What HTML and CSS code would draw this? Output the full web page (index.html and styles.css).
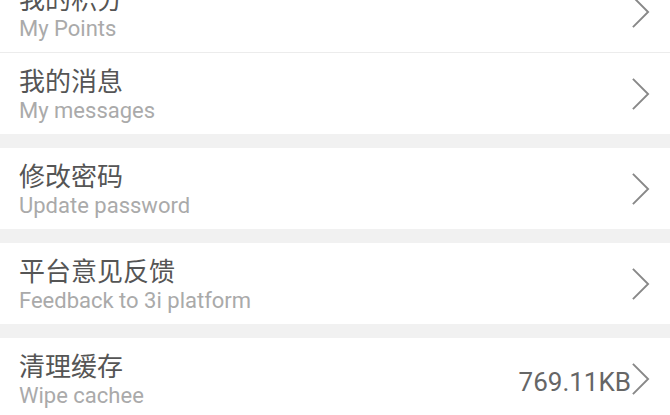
FILE: index.html
```html
<!DOCTYPE html>
<html lang="zh-CN">
<head>
    <meta charset="UTF-8">
    <meta name="viewport" content="width=device-width, initial-scale=1.0">
    <title>我的</title>
    <link rel="stylesheet" href="styles.css">
</head>
<body>
    <div class="menu">
        <div class="group">
            <div class="item">
                <div class="text">
                    <div class="title">我的积分</div>
                    <div class="sub">My Points</div>
                </div>
                <svg class="arrow" viewBox="0 0 20 36"><polyline points="2,2 18,18 2,34"/></svg>
            </div>
            <div class="item">
                <div class="text">
                    <div class="title">我的消息</div>
                    <div class="sub">My messages</div>
                </div>
                <svg class="arrow" viewBox="0 0 20 36"><polyline points="2,2 18,18 2,34"/></svg>
            </div>
        </div>

        <div class="group">
            <div class="item">
                <div class="text">
                    <div class="title">修改密码</div>
                    <div class="sub">Update password</div>
                </div>
                <svg class="arrow" viewBox="0 0 20 36"><polyline points="2,2 18,18 2,34"/></svg>
            </div>
        </div>

        <div class="group">
            <div class="item">
                <div class="text">
                    <div class="title">平台意见反馈</div>
                    <div class="sub">Feedback to 3i platform</div>
                </div>
                <svg class="arrow" viewBox="0 0 20 36"><polyline points="2,2 18,18 2,34"/></svg>
            </div>
        </div>

        <div class="group">
            <div class="item">
                <div class="text">
                    <div class="title">清理缓存</div>
                    <div class="sub">Wipe cachee</div>
                </div>
                <span class="value">769.11KB</span>
                <svg class="arrow" viewBox="0 0 20 36"><polyline points="2,2 18,18 2,34"/></svg>
            </div>
        </div>
    </div>
</body>
</html>
```

FILE: styles.css
```css
body {
    margin: 0;
    background: #f1f1f1;
    font-family: Roboto, "Noto Sans CJK SC", sans-serif;
    overflow: hidden;
}
.menu {
    margin-top: -29px; /* first row is scrolled half out of view */
    display: flex;
    flex-direction: column;
    gap: 14px;
}
.group {
    background: #fff;
}
.item {
    height: 81px;
    padding: 0 20px 0 19px;
    display: flex;
    align-items: center;
}
.item + .item {
    border-top: 1px solid #ececec;
}
.text {
    flex: 1;
    padding-top: 3px;
}
.title {
    font-family: "Noto Sans CJK SC", sans-serif;
    font-size: 26px;
    line-height: 30px;
    color: #555;
}
.sub {
    margin-top: 2px;
    font-size: 22px;
    line-height: 28px;
    color: #aaa;
}
.value {
    font-size: 26px;
    color: #666;
    padding-top: 6px;
}
.arrow {
    width: 19px;
    height: 36px;
    fill: none;
    stroke: #888;
    stroke-width: 2;
}
```
